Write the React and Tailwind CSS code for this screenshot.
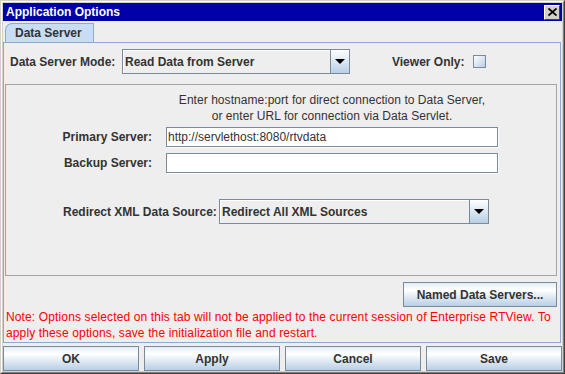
import React from 'react';

function Arrow() {
  return (
    <svg width="10" height="5" viewBox="0 0 10 5">
      <path d="M0 0H10L5 5Z" fill="#000" />
    </svg>
  );
}

function Combo({ value, className }) {
  return (
    <div className={`flex h-[25px] border border-[#7a8a99] bg-[#eeeeee] ${className}`}>
      <div className="flex-1 flex items-center pl-[2px] shadow-[inset_1px_1px_0_#ffffff] font-bold text-[12px] text-[#333333] whitespace-nowrap">
        {value}
      </div>
      <div className="w-[19px] flex items-center justify-center border-l border-[#7a8a99] bg-linear-to-b from-[#ffffff] to-[#b8cfe5]">
        <Arrow />
      </div>
    </div>
  );
}

function Button({ children, className }) {
  return (
    <div
      className={`h-[25px] flex items-center justify-center border border-[#7a8a99] bg-linear-to-b from-[#e4edf6] via-[#ffffff] via-30% to-[#b8cfe5] font-bold text-[12px] text-[#333333] whitespace-nowrap ${className}`}
    >
      {children}
    </div>
  );
}

function Field({ value }) {
  return (
    <div className="h-[20px] flex items-center pl-[1px] bg-white border border-[#7a8a99] shadow-[1px_1px_0_#ffffff] text-[12px] text-[#333333]">
      {value}
    </div>
  );
}

export default function App() {
  return (
    <div className="w-[565px] h-[374px] font-['Liberation_Sans',Arial,sans-serif] border border-[#d4d0c8] border-r-[#404040] border-b-[#404040]">
      <div className="w-full h-full border border-white border-r-[#808080] border-b-[#808080] bg-[#d4d0c8] p-px flex flex-col">
        {/* title bar */}
        <div className="h-[18px] bg-[#0000a8] flex items-center justify-between pl-[3px] pr-[2px]">
          <span className="text-white font-bold text-[12px]">Application Options</span>
          <div className="w-[16px] h-[15px] bg-[#d4d0c8] border border-white border-r-[#404040] border-b-[#404040] flex items-center justify-center">
            <svg width="9" height="8" viewBox="0 0 9 8">
              <path d="M0.5 0.5L8.5 7.5M8.5 0.5L0.5 7.5" stroke="#000" strokeWidth="1.8" />
            </svg>
          </div>
        </div>

        {/* body */}
        <div className="flex-1 bg-[#eeeeee] flex flex-col pt-[2px]">
          {/* tab header */}
          <div className="h-[19px] flex pl-[2px]">
            <div className="w-[89px] h-[19px] bg-[#c8ddf2] border border-b-0 border-[#8ea8d4] rounded-tl-[7px] flex items-center pl-[9px] font-bold text-[12px] text-[#333333]">
              Data Server
            </div>
          </div>

          {/* tab panel */}
          <div className="h-[301px] mr-px border border-[#8ea8d4] flex flex-col">
            <div className="mt-[6px] pl-[6px] h-[25px] flex items-center">
              <div className="w-[112px] font-bold text-[12px] text-[#333333] whitespace-nowrap">Data Server Mode:</div>
              <Combo value="Read Data from Server" className="w-[228px]" />
              <div className="ml-[42px] font-bold text-[12px] text-[#333333] whitespace-nowrap">Viewer Only:</div>
              <div className="ml-[9px] w-[13px] h-[13px] border border-[#7a8a99] bg-linear-to-br from-[#ffffff] to-[#b8cfe5]" />
            </div>

            {/* inner group */}
            <div className="mt-[10px] ml-px w-[552px] h-[192px] border border-[#a3a3a3] flex flex-col">
              <div className="pt-[7px] ml-[160px] w-[332px] text-center text-[12px] leading-[16px] text-[#333333] whitespace-nowrap tracking-[0.05px]">
                <div>Enter hostname:port for direct connection to Data Server,</div>
                <div>or enter URL for connection via Data Servlet.</div>
              </div>

              <div className="mt-[3px] grid grid-cols-[146px_332px] gap-x-[14px] gap-y-[6px] items-center">
                <div className="text-right font-bold text-[12px] text-[#333333]">Primary Server:</div>
                <Field value="http://servlethost:8080/rtvdata" />
                <div className="text-right font-bold text-[12px] text-[#333333]">Backup Server:</div>
                <Field value="" />
              </div>

              <div className="mt-[26px] pl-[57px] flex items-center">
                <div className="w-[156px] font-bold text-[12px] text-[#333333] whitespace-nowrap">Redirect XML Data Source:</div>
                <Combo value="Redirect All XML Sources" className="w-[270px]" />
              </div>
            </div>

            <div className="mt-[6px] flex justify-end pr-[3px]">
              <Button className="w-[154px]">Named Data Servers...</Button>
            </div>

            <div className="mt-[2px] pl-[2px] text-[12px] leading-[16px] text-[#ff0000] whitespace-nowrap tracking-[0.13px]">
              Note: Options selected on this tab will not be applied to the current session of Enterprise RTView. To
              <br />
              apply these options, save the initialization file and restart.
            </div>
          </div>

          {/* bottom buttons */}
          <div className="mt-[3px] flex gap-[5px]">
            <Button className="flex-1">OK</Button>
            <Button className="flex-1">Apply</Button>
            <Button className="flex-1">Cancel</Button>
            <Button className="flex-1">Save</Button>
          </div>
        </div>
      </div>
    </div>
  );
}
